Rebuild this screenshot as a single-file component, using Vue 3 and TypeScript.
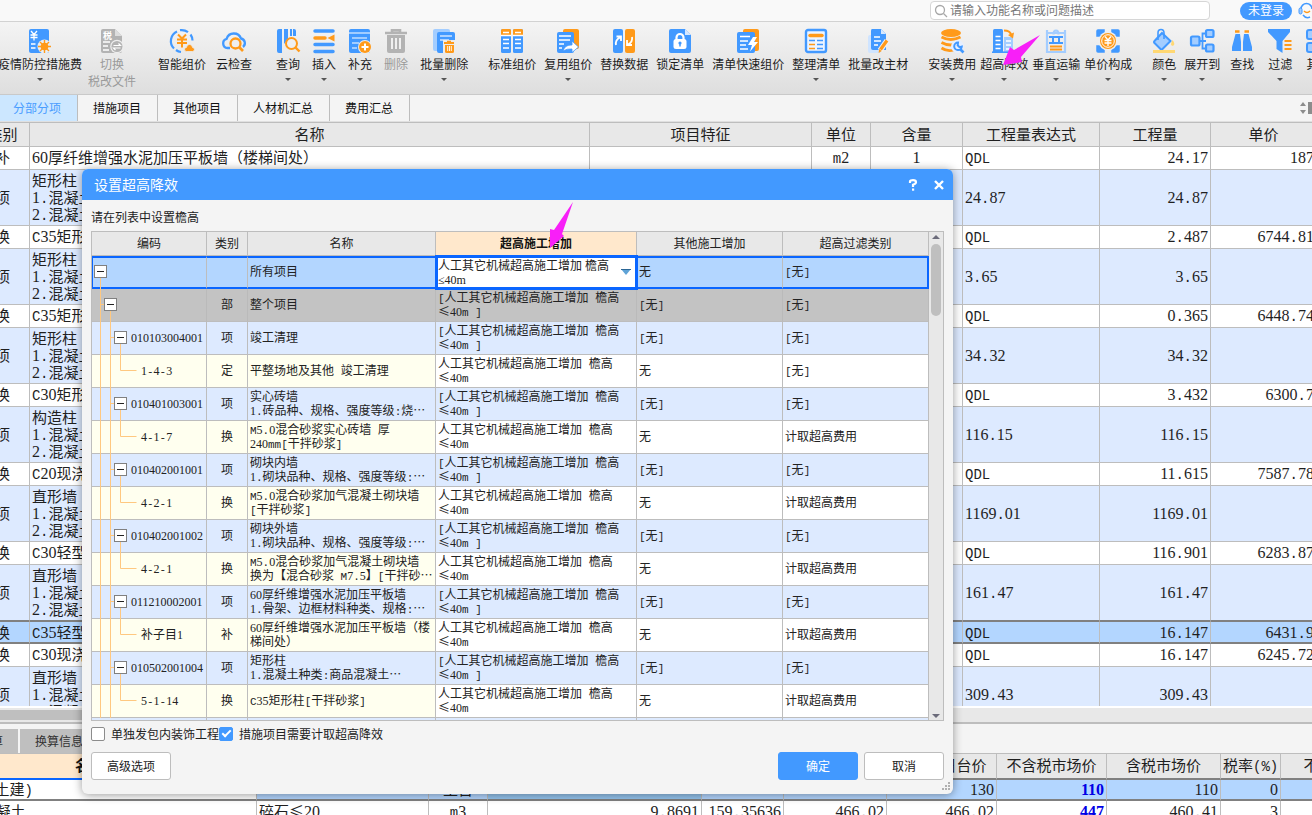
<script setup lang="ts">
import { h, ref } from 'vue'

type Tool = { label: string; sub?: string; icon: string; menu?: boolean; off?: boolean }
type ToolGroup = { cls: string; tools: Tool[] }
type SheetRow = {
  kind: string; name: string[]; unit?: string; ratio?: string
  expr: string; qty: string; price?: string; item?: boolean; sel?: boolean
}
type GridRow = {
  level: number; code?: string; kind?: string; name: string[]
  raise: string[]; other: string; filter: string; cls: string; open?: boolean
}

const Mixed = (props: { text: string }) =>
  (props.text.match(/[0-9]+|[ -\/:-~]+|[^ -~]+/g) ?? []).map((run) => {
    const cls = /^[0-9]/.test(run) ? 'run-num' : /^[ -~]/.test(run) ? 'run-sym' : 'run-han'
    return h('span', { class: cls }, run)
  })
Mixed.props = ['text']

const B = '#4299ff'
const O = '#ff9a1a'
const L = '#a3cdff'
const G = '#b3b3b3'
const yen = (x: number, y: number, c: string, w = 1.6) =>
  `<path d="M${x - 3} ${y - 4}l3 3.5l3-3.5M${x - 3.5} ${y}h7M${x - 3.5} ${y + 2.5}h7M${x} ${y}v5.5" fill="none" stroke="${c}" stroke-width="${w}"/>`

const icons: Record<string, string> = {
  virus: `<rect x="1" width="20" height="24" rx="2" fill="${B}"/>${yen(6, 6, '#fff', 1.3)}<path d="M3 15h4.500M3 19h4.500" stroke="#fff" stroke-width="1.600"/><circle cx="16.500" cy="17.500" r="7" fill="#e9eef5"/><circle cx="16.500" cy="17.500" r="3.800" fill="${O}"/><path d="M16.500 11v13M10 17.500h13M12 13l9 9M21 13l-9 9" stroke="${O}" stroke-width="1.400"/>`,
  tax: `<path d="M3 0h12l7 7v15q0 2-2 2H3q-2 0-2-2V2q0-2 2-2z" fill="${G}"/><path d="M15 0v7h7z" fill="#ddd"/><text x="3" y="10" font-size="9" font-weight="700" fill="#fff">税</text><path d="M3 13h7M3 17h5M3 21h6" stroke="#fff" stroke-width="1.400"/><circle cx="17" cy="17.500" r="6.800" fill="#eee"/><circle cx="17" cy="17.500" r="5.500" fill="${G}"/><path d="M13.500 16.500h7l-2-2M20.500 19h-7l2 2" stroke="#fff" stroke-width="1.200" fill="none"/>`,
  smart: `<path d="M7 2.500a10.500 10.500 0 0 0-3 17M10 1.200a10.500 10.500 0 0 1 8 2M20.500 5.500a10.500 10.500 0 0 1 2 6M6 21a10.500 10.500 0 0 0 5 2" fill="none" stroke="${B}" stroke-width="2.200"/><path d="M8 5.500l4 4l4-4M7 10.500h10M7 14h10M12 9.500v9" fill="none" stroke="${O}" stroke-width="2"/><path d="M16.500 22.500q-2.500-.3-2-2.500q.3-1.600 2-1.600q.4-3 3-3t3 3q2 .2 2 2q0 2-2 2.100z" fill="${O}" stroke="#ececec" stroke-width=".8"/>`,
  cloud: `<path d="M8 19H5.500A4.700 4.700 0 0 1 4.600 9.800A7.600 7.600 0 0 1 19 9.500A4.800 4.800 0 0 1 21 18" fill="none" stroke="${B}" stroke-width="2.300"/><circle cx="13.500" cy="14.500" r="5" fill="#efefef" stroke="${O}" stroke-width="2.300"/><path d="M17 18l4 4" stroke="${O}" stroke-width="2.600"/>`,
  query: `<path d="M1 2q0-2 2-2h3v24H3q-2 0-2-2zM8 0h4v10l-4 5zM14 0h2v7h-2zM17 0h1q2 0 2 2v5h-3z" fill="${B}"/><circle cx="15.500" cy="14.500" r="5.500" fill="#efefef" stroke="${O}" stroke-width="2"/><path d="M19.500 18.500l4 4" stroke="${O}" stroke-width="2.400"/>`,
  insert: `<path d="M3 2h18M3 15.500h18M3 22.500h18" stroke="${B}" stroke-width="3.500" stroke-linecap="round"/><path d="M3 9h10" stroke="${O}" stroke-width="3.500" stroke-linecap="round"/><path d="M15.500 9l7-3.500v7z" fill="${O}"/>`,
  add: `<rect x="1" width="21" height="24" rx="2" fill="${B}"/><path d="M1 4h21M4 9h15M4 14h7M4 19h5" stroke="#fff" stroke-width="1.200"/><circle cx="17" cy="18" r="7" fill="#ececec"/><circle cx="17" cy="18" r="6" fill="${O}"/><path d="M17 14.500v7M13.500 18h7" stroke="#fff" stroke-width="2"/>`,
  trash: `<path d="M1 4h22M8 3V1.200h8V3" fill="none" stroke="${G}" stroke-width="2.600"/><path d="M3 6h18v16q0 2-2 2H5q-2 0-2-2z" fill="${G}"/><path d="M8 9v11M12 9v11M16 9v11" stroke="#fff" stroke-width="1.600"/>`,
  batchdel: `<rect x="1" width="17" height="22" rx="2" fill="${L}"/><rect x="5" y="3" width="18" height="21" rx="2" fill="${B}"/><path d="M8 7h12M8 11h9" stroke="#cfe4ff" stroke-width="1.500"/><path d="M11 11h12v13H11z" fill="#ececec"/><path d="M12 14h10M15 12.800h4" stroke="${O}" stroke-width="2"/><path d="M13 16h9v6.500q0 1.500-1.500 1.500h-6q-1.500 0-1.500-1.500z" fill="${O}"/><path d="M15.700 17v5M19.300 17v5M17.500 17v5" stroke="#fff" stroke-width=".9"/>`,
  standard: `<rect x="1" width="10" height="24" rx="1.500" fill="${B}"/><rect x="13" width="10" height="24" rx="1.500" fill="${B}"/><path d="M1 6V1.500Q1 0 2.500 0h7Q11 0 11 1.500V6zM13 6V1.500Q13 0 14.500 0h7Q23 0 23 1.500V6z" fill="${O}"/><path d="M3 3.500h6M15 3.500h6M1 6.500h10M13 6.500h10M3 10.500h6M3 14.500h6M3 19h6M15 10.500h6M15 14.500h6M15 19h6" stroke="#fff" stroke-width="1.400"/>`,
  reuse: `<rect x="7" width="16" height="20" rx="2" fill="${O}"/><rect x="1" y="3" width="17" height="21" rx="2" fill="${B}"/><path d="M3 7h12M3 11h11M3 15h5M3 19h3" stroke="#fff" stroke-width="1.500"/><path d="M7 22q2-6.500 9-6v-4l6.500 6l-6.500 5.500v-3.500q-5-.5-9 2z" fill="#fff" stroke="${B}" stroke-width=".8"/>`,
  replace: `<rect x="1" width="10" height="24" rx="2" fill="${B}"/><rect x="13" width="10" height="24" rx="2" fill="${O}"/><path d="M4 16q-1-5 4-7.500M4.500 7.500H9v4.500" fill="none" stroke="#fff" stroke-width="1.800"/><path d="M20 8q1 5-4 7.500M15 11v5h5" fill="none" stroke="#fff" stroke-width="1.800"/>`,
  lock: `<path d="M3 0h14l6 6v16q0 2-2 2H3q-2 0-2-2V2q0-2 2-2z" fill="${B}"/><path d="M17 0v6h6z" fill="#d6e8ff"/><rect x="5.500" y="10" width="13" height="10" rx="2.500" fill="#fff"/><path d="M8.500 11V8.500a3.500 3.500 0 0 1 7 0V11" fill="none" stroke="#fff" stroke-width="2.200"/><circle cx="12" cy="14" r="1.600" fill="${B}"/><path d="M12 14v3.500" stroke="${B}" stroke-width="1.500"/>`,
  quick: `<rect x="7" width="16" height="22" rx="2" fill="${O}"/><rect x="1" y="3" width="18" height="21" rx="2" fill="${B}"/><path d="M4 7.500h10M4 12h8M4 16h6M4 20h8" stroke="#fff" stroke-width="1.500"/><path d="M17 8l-5 8h4l-2 6.500l8-9.500h-4l3-5z" fill="#fff"/>`,
  arrange: `<rect x="2" y="1" width="20" height="22" rx="2" fill="#eef5ff" stroke="${B}" stroke-width="2.400"/><path d="M6 6.500h12" stroke="${O}" stroke-width="3.500" stroke-linecap="round"/><path d="M5 11.500h6M13 15.500h6M13 19.500h6M13 11.500h6" stroke="${B}" stroke-width="1.700"/><path d="M5 15.500h6M5 19.500h6" stroke="${O}" stroke-width="1.700"/>`,
  edit: `<rect x="2" y="6" width="13" height="18" rx="2" fill="#cfe4ff"/><path d="M6 0h9l5 5v16h-13q-2 0-2-2V2q0-2 1-2z" fill="${B}"/><path d="M15 0v5h5z" fill="#d6e8ff"/><path d="M8 8h6M8 12h7M8 16h4" stroke="#fff" stroke-width="1.500"/><path d="M14 21.500l7-10" stroke="#f2f2f2" stroke-width="5.500"/><path d="M14.500 20.500l6.500-9" stroke="${O}" stroke-width="3.200"/><path d="M12.600 24l.5-4l2.600 2z" fill="${O}"/>`,
  install: `<ellipse cx="11" cy="4" rx="10" ry="4" fill="${O}"/><path d="M1.500 8q9 5 19 0M1.500 13.500q9 5 19 0M1.500 19q6 4 12 2" fill="none" stroke="${O}" stroke-width="2.800"/><circle cx="17.500" cy="17.500" r="6.500" fill="#e6efff"/><path d="M18 13.500a3.800 3.800 0 1 0 3.800 4l-2.300.6l-1.800-1.800z" fill="none" stroke="${B}" stroke-width="2"/><path d="M20 20l3.500 3.500" stroke="${B}" stroke-width="2.600"/>`,
  height: `<rect x="1" y="0" width="10" height="24" rx="1.500" fill="${B}"/><path d="M3.500 7.500h5M3.500 11.500h5M3.500 15.500h5M3.500 19.500h5" stroke="#fff" stroke-width="1.500"/><rect x="12" y="8" width="9" height="15" fill="${L}"/><path d="M14 12h5M14 16h5M14 20h5" stroke="#fff" stroke-width="1.300"/><path d="M0 23.200h23" stroke="${B}" stroke-width="1.600"/><path d="M12 1.500q6 0 7 4" fill="none" stroke="${O}" stroke-width="2.200"/><path d="M22 3.500l-1 6l-5-3.500z" fill="${O}"/>`,
  lift: `<path d="M3 1v23M21 1v23M3 4h18M9.500 5.500q0-4 2.500-4t2.500 4" fill="none" stroke="${L}" stroke-width="2.200"/><path d="M5 8h14M5 14h14M9 8v6M15 8v6" stroke="${B}" stroke-width="2"/><path d="M6 17.500h12M6 20.500h12" stroke="${O}" stroke-width="2"/><path d="M3 23h18" stroke="${L}" stroke-width="2"/>`,
  compose: `<path d="M1 2q0-1 1-1h6v3H5v3H1zM23 2q0-1-1-1h-6v3h3v3h4zM1 22q0 1 1 1h6v-3H5v-3H1zM23 22q0 1-1 1h-6v-3h3v-3h4z" fill="${B}" stroke="${B}" stroke-width="1.500"/><circle cx="12" cy="12" r="9.500" fill="#efefef"/><circle cx="12" cy="12" r="8" fill="${O}"/><circle cx="12" cy="12" r="6.300" fill="none" stroke="#fff" stroke-width="1"/>${yen(12, 11.5, '#fff', 1.3)}`,
  color: `<path d="M10 4l8.500 8l-8 8q-1 1-2 0l-6-6q-1-1 0-2z" fill="${L}" stroke="${B}" stroke-width="2"/><path d="M6 11V4q0-3.500 3-3.500t3 3.500v6" fill="none" stroke="${B}" stroke-width="1.600"/><path d="M20.500 11q3 4 1 5.500q-2 .7-2.500-1q0-2 1.500-4.500z" fill="#ffd873"/><path d="M1 22.500h22" stroke="#ffd873" stroke-width="3"/>`,
  expand: `<path d="M9 12h7M12.500 12V4.500h4M12.500 12v7.500h4" fill="none" stroke="${B}" stroke-width="1.800"/><rect x="1" y="7.500" width="8.500" height="9" rx="1.500" fill="${L}" stroke="${B}" stroke-width="2.200"/><rect x="16" y="1" width="7.500" height="7" rx="1.500" fill="${L}" stroke="${B}" stroke-width="2.200"/><rect x="16" y="15.500" width="7.500" height="7" rx="1.500" fill="${L}" stroke="${B}" stroke-width="2.200"/>`,
  find: `<path d="M5.500 5h4.500l1 8v9H2v-4zM14 5h4.500l3.500 13v4h-9v-9z" fill="${B}"/><path d="M5 2.500h4.500M14.500 2.500H19" stroke="${O}" stroke-width="2.400"/>`,
  filter: `<path d="M0 0h22v3l-7.500 9v12l-6-4v-8L0 3z" fill="${B}"/><path d="M16.500 12h7M16.500 16h7M16.500 20h7" stroke="${O}" stroke-width="2.200"/>`,
  other: `<rect x="1" y="1" width="9" height="9" rx="2" fill="${L}" stroke="${B}" stroke-width="2"/><rect x="14" y="1" width="9" height="9" rx="2" fill="${L}" stroke="${B}" stroke-width="2"/><rect x="1" y="14" width="9" height="9" rx="2" fill="${L}" stroke="${B}" stroke-width="2"/><rect x="14" y="14" width="9" height="9" rx="2" fill="${L}" stroke="${B}" stroke-width="2"/>`,
}

const groups: ToolGroup[] = [
  { cls: 'gap-6 first', tools: [
    { label: '疫情防控措施费', icon: 'virus', menu: true },
    { label: '切换', sub: '税改文件', icon: 'tax', off: true },
  ] },
  { cls: 'gap-10 lead-22', tools: [
    { label: '智能组价', icon: 'smart' },
    { label: '云检查', icon: 'cloud' },
  ] },
  { cls: 'gap-12 lead-24', tools: [
    { label: '查询', icon: 'query', menu: true },
    { label: '插入', icon: 'insert', menu: true },
    { label: '补充', icon: 'add', menu: true },
    { label: '删除', icon: 'trash', off: true },
    { label: '批量删除', icon: 'batchdel', menu: true },
  ] },
  { cls: 'gap-8', tools: [
    { label: '标准组价', icon: 'standard' },
    { label: '复用组价', icon: 'reuse', menu: true },
    { label: '替换数据', icon: 'replace' },
    { label: '锁定清单', icon: 'lock' },
    { label: '清单快速组价', icon: 'quick' },
    { label: '整理清单', icon: 'arrange', menu: true },
    { label: '批量改主材', icon: 'edit' },
  ] },
  { cls: 'gap-4', tools: [
    { label: '安装费用', icon: 'install', menu: true },
    { label: '超高降效', icon: 'height', menu: true },
    { label: '垂直运输', icon: 'lift', menu: true },
    { label: '单价构成', icon: 'compose', menu: true },
  ] },
  { cls: 'gap-8', tools: [
    { label: '颜色', icon: 'color', menu: true },
    { label: '展开到', icon: 'expand', menu: true },
  ] },
  { cls: 'gap-14 lead-10', tools: [
    { label: '查找', icon: 'find' },
    { label: '过滤', icon: 'filter', menu: true },
    { label: '其他', icon: 'other' },
  ] },
]

const tabs = ['分部分项', '措施项目', '其他项目', '人材机汇总', '费用汇总']
const activeTab = ref(tabs[0])

const spec = (title: string) => [title, '1.混凝土', '2.混凝土']
const rows: SheetRow[] = [
  { kind: '补', name: ['60厚纤维增强水泥加压平板墙（楼梯间处）'], unit: 'm2', ratio: '1', expr: 'QDL', qty: '24.17', price: '187' },
  { kind: '项', name: spec('矩形柱'), expr: '24.87', qty: '24.87', item: true },
  { kind: '换', name: ['C35矩形柱'], expr: 'QDL', qty: '2.487', price: '6744.81' },
  { kind: '项', name: spec('矩形柱'), expr: '3.65', qty: '3.65', item: true },
  { kind: '换', name: ['C35矩形柱'], expr: 'QDL', qty: '0.365', price: '6448.74' },
  { kind: '项', name: spec('矩形柱'), expr: '34.32', qty: '34.32', item: true },
  { kind: '换', name: ['C30矩形柱'], expr: 'QDL', qty: '3.432', price: '6300.7' },
  { kind: '项', name: spec('构造柱'), expr: '116.15', qty: '116.15', item: true },
  { kind: '换', name: ['C20现浇'], expr: 'QDL', qty: '11.615', price: '7587.78' },
  { kind: '项', name: spec('直形墙'), expr: '1169.01', qty: '1169.01', item: true },
  { kind: '换', name: ['C30轻型'], expr: 'QDL', qty: '116.901', price: '6283.87' },
  { kind: '项', name: spec('直形墙'), expr: '161.47', qty: '161.47', item: true },
  { kind: '换', name: ['C35轻型'], expr: 'QDL', qty: '16.147', price: '6431.9', sel: true },
  { kind: '换', name: ['C30现浇'], expr: 'QDL', qty: '16.147', price: '6245.72' },
  { kind: '项', name: spec('直形墙'), expr: '309.43', qty: '309.43', item: true },
]

const bracketed = ['[人工其它机械超高施工增加 檐高', '≤40m ]']
const plain = ['人工其它机械超高施工增加 檐高', '≤40m']
const item = (code: string, ...name: string[]): GridRow =>
  ({ level: 2, code, kind: '项', name, raise: bracketed, other: '[无]', filter: '[无]', cls: 'item', open: true })
const leaf = (code: string, kind: string, filter: string, ...name: string[]): GridRow =>
  ({ level: 3, code, kind, name, raise: plain, other: '无', filter, cls: 'leaf' })

const grid: GridRow[] = [
  { level: 0, name: ['所有项目'], raise: plain, other: '无', filter: '[无]', cls: 'current', open: true },
  { level: 1, kind: '部', name: ['整个项目'], raise: bracketed, other: '[无]', filter: '[无]', cls: 'part', open: true },
  item('010103004001', '竣工清理'),
  leaf('1-4-3', '定', '[无]', '平整场地及其他 竣工清理'),
  item('010401003001', '实心砖墙', '1.砖品种、规格、强度等级:烧…'),
  leaf('4-1-7', '换', '计取超高费用', 'M5.0混合砂浆实心砖墙 厚', '240mm[干拌砂浆]'),
  item('010402001001', '砌块内墙', '1.砌块品种、规格、强度等级:…'),
  leaf('4-2-1', '换', '计取超高费用', 'M5.0混合砂浆加气混凝土砌块墙', '[干拌砂浆]'),
  item('010402001002', '砌块外墙', '1.砌块品种、规格、强度等级:…'),
  leaf('4-2-1', '换', '计取超高费用', 'M5.0混合砂浆加气混凝土砌块墙', '换为【混合砂浆 M7.5】[干拌砂…'),
  item('011210002001', '60厚纤维增强水泥加压平板墙', '1.骨架、边框材料种类、规格:…'),
  leaf('补子目1', '补', '计取超高费用', '60厚纤维增强水泥加压平板墙（楼', '梯间处）'),
  item('010502001004', '矩形柱', '1.混凝土种类:商品混凝土…'),
  leaf('5-1-14', '换', '计取超高费用', 'C35矩形柱[干拌砂浆]'),
]

const raiseValue = ref('≤40m')
const onlyFinish = ref(false)
const withMeasures = ref(true)
</script>

<template>
  <div class="app">
    <header class="topbar">
      <label class="search">
        <svg width="14" height="14" viewBox="0 0 14 14" aria-hidden="true"><circle cx="6" cy="6" r="4.500" fill="none" stroke="#a8a8a8" stroke-width="1.300" /><path d="M9.500 9.500l3.500 3.500" stroke="#a8a8a8" stroke-width="1.300" /></svg>
        <input type="text" placeholder="请输入功能名称或问题描述" aria-label="搜索" />
      </label>
      <button type="button" class="login">未登录</button>
      <button type="button" class="service" aria-label="客服">
        <svg width="16" height="18" viewBox="0 0 16 18"><path d="M3 7a5.500 5.500 0 0 1 11 0" fill="none" stroke="#4299ff" stroke-width="1.500" /><rect x="1" y="6" width="3" height="6" rx="1.500" fill="#a3cdff" stroke="#4299ff" /><path d="M5 13q3 4 7 2" fill="none" stroke="#4299ff" stroke-width="1.500" /><path d="M6 9q3 3 6 0" fill="none" stroke="#ff9a1a" stroke-width="1.500" /></svg>
      </button>
    </header>

    <nav class="toolbar" aria-label="工具栏">
      <div v-for="(g, gi) in groups" :key="gi" class="group" :class="g.cls">
        <button v-for="t in g.tools" :key="t.label" type="button" class="tool" :class="{ off: t.off }">
          <svg class="icon" width="24" height="24" viewBox="0 0 24 24" aria-hidden="true" v-html="icons[t.icon]"></svg>
          <span>{{ t.label }}</span>
          <span v-if="t.sub">{{ t.sub }}</span>
          <i v-if="t.menu" class="caret"></i>
        </button>
      </div>
    </nav>

    <div class="tabs">
      <button v-for="t in tabs" :key="t" type="button" :class="{ active: t === activeTab }" @click="activeTab = t">{{ t }}</button>
      <svg class="updown" width="12" height="14" viewBox="0 0 12 14" aria-hidden="true"><path d="M0 5l3-4l3 4zM0 9l3 4l3-4z" fill="#8c8c8c" /><rect x="8" y="1" width="4" height="12" fill="#8c8c8c" /></svg>
    </div>

    <main class="main">
      <table class="sheet list">
        <colgroup><col class="w54" /><col class="w560" /><col /><col class="w59" /><col class="w92" /><col class="w137" /><col class="w111" /><col class="w106" /></colgroup>
        <thead>
          <tr><th>类别</th><th>名称</th><th>项目特征</th><th>单位</th><th>含量</th><th>工程量表达式</th><th>工程量</th><th>单价</th></tr>
        </thead>
        <tbody>
          <tr v-for="(r, i) in rows" :key="i" :class="{ item: r.item, sel: r.sel }">
            <td class="c">{{ r.kind }}</td>
            <td><div v-for="n in r.name" :key="n" class="line"><Mixed :text="n" /></div></td>
            <td></td>
            <td class="c"><Mixed v-if="r.unit" :text="r.unit" /></td>
            <td class="c"><Mixed v-if="r.ratio" :text="r.ratio" /></td>
            <td><Mixed :text="r.expr" /></td>
            <td class="r"><Mixed :text="r.qty" /></td>
            <td class="r"><Mixed v-if="r.price" :text="r.price" /></td>
          </tr>
        </tbody>
      </table>
    </main>
    <div class="hscroll"><div class="thumb"></div></div>

    <section class="detail">
      <div class="subtabs">
        <button type="button" class="cut">算</button>
        <button type="button">换算信息</button>
      </div>
      <table class="sheet lower">
        <colgroup><col class="w333" /><col class="w172" /><col class="w59" /><col /><col class="w82" /><col class="w103" /><col class="w110" /><col class="w110" /><col class="w114" /><col class="w60" /><col class="w106" /></colgroup>
        <thead>
          <tr><th class="hot">名称</th><th></th><th></th><th></th><th></th><th></th><th>定额工日台价</th><th>不含税市场价</th><th>含税市场价</th><th>税率<Mixed text="(%)" /></th><th>不含税价</th></tr>
        </thead>
        <tbody>
          <tr class="sel">
            <td class="white"><Mixed text="综合工日(土建)" /></td><td></td><td class="c">工日</td><td class="deep"></td><td></td><td></td>
            <td class="r"><Mixed text="130" /></td><td class="r key"><Mixed text="110" /></td><td class="r"><Mixed text="110" /></td><td class="r"><Mixed text="0" /></td><td></td>
          </tr>
          <tr>
            <td><Mixed text="C30商品混凝土" /></td><td><Mixed text="碎石≤20" /></td><td class="c"><Mixed text="m3" /></td><td class="r"><Mixed text="9.8691" /></td><td class="r"><Mixed text="159.35636" /></td><td class="r"><Mixed text="466.02" /></td>
            <td class="r"><Mixed text="466.02" /></td><td class="r key"><Mixed text="447" /></td><td class="r"><Mixed text="460.41" /></td><td class="r"><Mixed text="3" /></td><td></td>
          </tr>
        </tbody>
      </table>
    </section>

    <div class="dialog" role="dialog" aria-labelledby="dlg-title">
      <div class="titlebar">
        <h1 id="dlg-title">设置超高降效</h1>
        <button type="button" aria-label="帮助"><svg width="10" height="12" viewBox="0 0 10 12"><path d="M2 4V2.500Q2 1.200 5 1.200T8 3.200Q8 4.500 5 5.800V8" fill="none" stroke="#fff" stroke-width="2.200" /><rect x="4" y="9.500" width="2.200" height="2.200" fill="#fff" /></svg></button>
        <button type="button" aria-label="关闭"><svg width="10" height="10" viewBox="0 0 10 10"><path d="M1 1l8 8M9 1l-8 8" stroke="#fff" stroke-width="2.400" /></svg></button>
      </div>
      <div class="body">
        <p>请在列表中设置檐高</p>
        <div class="frame">
          <div class="view">
            <table class="grid">
              <colgroup><col class="w115" /><col class="w41" /><col class="w188" /><col class="w201" /><col /><col class="w146" /></colgroup>
              <thead>
                <tr><th>编码</th><th>类别</th><th>名称</th><th class="hot">超高施工增加</th><th>其他施工增加</th><th>超高过滤类别</th></tr>
              </thead>
              <tbody>
                <tr v-for="(r, i) in grid" :key="i" :class="r.cls">
                  <td class="code" :class="'lv' + r.level">
                    <svg class="tree" width="46" height="33" viewBox="0 0 46 33" aria-hidden="true">
                      <g fill="none" stroke="#ffc880">
                        <path v-if="r.level > 0" d="M8.500 0v33" />
                        <path v-else d="M8.500 22v11" />
                        <path v-if="r.level > 1" d="M18.500 0v33" />
                        <path v-if="r.level === 1" d="M8.500 15.500h4M18.500 22v11" />
                        <path v-if="r.level === 2" d="M18.500 15.500h4M28.500 22v11" />
                        <path v-if="r.level === 3" d="M28.500 0v15.500h16" />
                      </g>
                      <g v-if="r.open" :transform="`translate(${r.level * 10 + 2} 9)`">
                        <rect x="0.500" y="0.500" width="12" height="12" fill="#fff" stroke="#808080" />
                        <path d="M3 6.500h7" stroke="#222" />
                      </g>
                    </svg>
                    <Mixed v-if="r.code" :text="r.code" />
                  </td>
                  <td class="c">{{ r.kind }}</td>
                  <td><div v-for="n in r.name" :key="n" class="line"><Mixed :text="n" /></div></td>
                  <td v-if="r.level === 0" class="editor">
                    <div class="combo">
                      <select v-model="raiseValue" aria-label="超高施工增加">
                        <option value="≤40m">人工其它机械超高施工增加 檐高≤40m</option>
                      </select>
                      <svg width="10" height="6" viewBox="0 0 10 6" aria-hidden="true"><path d="M0 0h10L5 6z" fill="#5fa3d6" /><path d="M0 .5h10" stroke="#2c6796" /></svg>
                    </div>
                  </td>
                  <td v-else><div v-for="n in r.raise" :key="n" class="line"><Mixed :text="n" /></div></td>
                  <td><Mixed :text="r.other" /></td>
                  <td><Mixed :text="r.filter" /></td>
                </tr>
                <tr class="item"><td></td><td></td><td></td><td></td><td></td><td></td></tr>
              </tbody>
            </table>
          </div>
          <div class="vscroll">
            <svg width="8" height="4" viewBox="0 0 8 4" aria-hidden="true"><path d="M0 4l4-4l4 4z" fill="#6b6b7a" /></svg>
            <div class="vthumb"></div>
            <svg width="8" height="4" viewBox="0 0 8 4" aria-hidden="true"><path d="M0 0l4 4l4-4z" fill="#6b6b7a" /></svg>
          </div>
        </div>
        <div class="checks">
          <label><input v-model="onlyFinish" type="checkbox" />单独发包内装饰工程</label>
          <label><input v-model="withMeasures" type="checkbox" />措施项目需要计取超高降效</label>
        </div>
        <div class="actions">
          <button type="button">高级选项</button>
          <button type="button" class="primary">确定</button>
          <button type="button">取消</button>
        </div>
      </div>
      <svg class="grip" width="8" height="8" viewBox="0 0 8 8" aria-hidden="true"><path d="M6 0h2v2H6zM3 3h2v2H3zM6 3h2v2H6zM0 6h2v2H0zM3 6h2v2H3zM6 6h2v2H6z" fill="#b0b0b0" /></svg>
    </div>

    <svg class="mark one" width="37" height="31" viewBox="0 0 37 31" aria-hidden="true"><path d="M0 30L7 12l4 3L37 0L18 22l1 5z" fill="#f81ff8" /></svg>
    <svg class="mark two" width="24" height="47" viewBox="0 0 24 47" aria-hidden="true"><path d="M0 46V27l4 1L23 0L12 32l2 2z" fill="#f81ff8" /></svg>
  </div>
</template>

<style>
html, body { margin: 0; background: #f4f4f4; }
.run-num { font-family: "Liberation Serif", serif; line-height: 0; }
.run-sym { font-family: "Liberation Mono", monospace; line-height: 0; white-space: pre; }
.run-han { line-height: 0; }
.sheet .run-num { font-size: 16px; }
.sheet .run-sym { font-size: 14px; }
.grid .run-num { font-size: 12px; }
.grid .run-sym { font-size: 11px; }
</style>

<style scoped>
.app {
  position: relative;
  display: flex;
  flex-direction: column;
  height: 100vh;
  overflow: hidden;
  background: #f4f4f4;
  color: #222;
  font-family: "Noto Sans CJK SC", sans-serif;
  font-size: 12px;
  line-height: 16px;
}
button, input, select { font: inherit; color: inherit; margin: 0; }
button { border: 0; padding: 0; background: none; white-space: nowrap; }

.topbar {
  display: flex;
  flex: none;
  justify-content: flex-end;
  align-items: center;
  height: 21px;
  border-bottom: 1px solid #d2d2d2;
  background: #f9f9f9;
}
.search {
  display: flex;
  align-items: center;
  width: 278px;
  height: 17px;
  margin-right: 30px;
  border: 1px solid #d6d6d6;
  border-radius: 4px;
  background: #fff;
}
.search svg { margin: 0 2px 0 3px; }
.search input { flex: 1; height: 16px; padding: 0 0 1px; border: 0; outline: 0; background: none; }
.search input::placeholder { color: #777; opacity: 1; }
.login { width: 52px; height: 18px; padding-bottom: 1px; border-radius: 9px; background: #4299ff; color: #fff; }
.service { width: 14px; height: 18px; margin-left: 6px; }

.toolbar {
  display: flex;
  flex: none;
  height: 72px;
  overflow: hidden;
  border-bottom: 1px solid #c9c9c9;
  background: linear-gradient(#f4f4f4, #dedede);
}
.group { display: flex; flex: none; margin-left: 20px; }
.group.first { margin-left: -2px; }
.group.lead-10 { margin-left: 10px; }
.group.lead-22 { margin-left: 22px; }
.group.lead-24 { margin-left: 24px; }
.gap-4 { gap: 4px; }
.gap-6 { gap: 6px; }
.gap-8 { gap: 8px; }
.gap-10 { gap: 10px; }
.gap-12 { gap: 12px; }
.gap-14 { gap: 14px; }
.tool { display: flex; flex-direction: column; align-items: center; padding-top: 7px; color: #1c1c1c; line-height: 17px; }
.tool.off { color: #9a9a9a; }
.icon { overflow: visible; margin-bottom: 2px; }
.caret { margin-top: 6px; border: 3px solid transparent; border-top-color: #555; border-bottom: 0; }

.tabs { display: flex; flex: none; align-items: center; height: 26px; border-bottom: 1px solid #e0e0e0; }
.tabs button { height: 26px; padding: 0 16px 0 15px; border-right: 1px solid #bdbdbd; color: #111; }
.tabs button.active { padding: 0 16px 0 13px; background: #cce7ff; color: #4a9dff; }
.updown { margin-left: auto; }

.main { flex: 1; min-height: 0; overflow: hidden; border-top: 1px solid #bdbdbd; background: #fff; border-bottom: 2px solid #fff; }
.sheet { table-layout: fixed; border-collapse: separate; border-spacing: 0; font-size: 15px; line-height: 17px; color: #1f1f1f; }
.list { width: calc(100% + 29px); margin-left: -24px; }
.sheet th, .sheet td { box-sizing: border-box; padding: 0 2px 3px; border: 0 solid #bdbdbd; border-width: 0 1px 1px 0; overflow: hidden; white-space: nowrap; text-align: left; }
.sheet th { height: 24px; background: #e8e8e8; font-weight: 400; text-align: center; }
.sheet td { height: 23px; background: #fff; }
.sheet td.c { text-align: center; }
.sheet td.r { text-align: right; }
.sheet .item td { height: 56px; background: #ddeaff; }
.sheet .sel td { padding-bottom: 2px; border-top: 1px solid #808080; border-bottom: 2px solid #808080; background: #b3d6ff; }
.list tr:has(+ .sel) td { border-bottom-color: #808080; }
.w41 { width: 41px; } .w54 { width: 54px; } .w59 { width: 59px; } .w60 { width: 60px; }
.w82 { width: 82px; } .w92 { width: 92px; } .w103 { width: 103px; } .w106 { width: 106px; }
.w110 { width: 110px; } .w111 { width: 111px; } .w114 { width: 114px; } .w115 { width: 115px; }
.w137 { width: 137px; } .w146 { width: 146px; } .w172 { width: 172px; } .w188 { width: 188px; }
.w201 { width: 201px; } .w333 { width: 333px; } .w560 { width: 560px; }

.hscroll { flex: none; height: 14px; border-bottom: 2px solid #bdbdbd; background: #e8e8e8; }
.thumb { width: 40%; height: 10px; margin-top: 2px; border-radius: 0 5px 5px 0; background: #bfbfbf; }

.detail { flex: none; height: 91px; overflow: hidden; }
.subtabs { display: flex; gap: 2px; height: 24px; padding-top: 5px; border-bottom: 1px solid #bdbdbd; }
.subtabs button { padding: 0 15px; background: #bfbfbf; color: #333; }
.subtabs .cut { margin-left: -24px; }
.lower { width: calc(100% + 151px); margin-left: -76px; }
.lower th { height: 26px; padding-bottom: 4px; border-bottom: 2px solid #808080; }
.lower th.hot { border-bottom-color: #0a66ff; background: #ffe8cc; color: #111; font-weight: 700; }
.lower .sel td { height: 21px; border-top: 0; }
.lower .sel td.white { background: #fff; }
.lower .sel td.deep { background: #94c4ee; }
.lower .key { color: #0000e6; font-weight: 700; }

.dialog {
  position: absolute;
  top: 169px;
  left: 82px;
  right: 359px;
  border-radius: 6px;
  background: #f4f4f4;
  box-shadow: 0 1px 10px rgba(0, 0, 0, 0.4);
}
.titlebar { display: flex; align-items: center; gap: 16px; height: 31px; padding: 0 9px 0 12px; border-radius: 6px 6px 0 0; background: #4299ff; }
.titlebar h1 { flex: 1; margin: 0; padding-bottom: 2px; color: #fff; font-size: 14px; font-weight: 400; line-height: 20px; }
.titlebar button { display: flex; }
.body { padding: 9px 9px 14px; }
.body p { margin: 0 0 6px; }
.frame { display: flex; height: 488px; border: 1px solid #bdbdbd; background: #fff; }
.view { flex: 1; min-width: 0; overflow: hidden; }
.grid { width: 100%; table-layout: fixed; border-collapse: separate; border-spacing: 0; line-height: 14px; }
.grid th, .grid td { box-sizing: border-box; padding: 0 2px 3px; border: 0 solid #bdbdbd; border-width: 0 1px 1px 0; white-space: nowrap; text-align: left; }
.grid th { height: 24px; padding-bottom: 1px; background: #e8e8e8; font-weight: 400; text-align: center; }
.grid th.hot { background: #ffe8cc; color: #111; font-weight: 700; }
.grid td { height: 33px; background: #fff; }
.grid td.c { text-align: center; }
.grid td.code { position: relative; padding-left: 39px; }
.grid td.lv3 { padding-left: 49px; }
.tree { position: absolute; top: 0; left: 0; z-index: 1; }
.grid .item td { background: #ddeaff; }
.grid .part td { background: #c3c3c3; border-right-color: #bababa; }
.grid .leaf td:nth-child(-n + 3) { background: #ffffef; }
.grid .current td { border-top: 2px solid #0a66ff; border-bottom: 2px solid #0a66ff; background: #b3d6ff; }
.grid .current td:first-child { border-left: 1px solid #0a66ff; }
.grid .current td:last-child { border-right: 2px solid #0a66ff; }
.grid .current .tree { top: -2px; left: -1px; }
.grid .current td.editor { position: relative; padding: 0; }
.combo { position: absolute; inset: -3px -2px -3px -1px; z-index: 2; border: 3px solid #0a66ff; background: #fff; }
.combo select { width: 100%; height: 28px; padding: 0 16px 0 0; border: 0; outline: 0; appearance: none; background: none; font-family: "Liberation Serif", "Noto Sans CJK SC", serif; line-height: 14px; white-space: normal; }
.combo svg { position: absolute; right: 4px; top: 11px; pointer-events: none; }

.vscroll { display: flex; flex: none; flex-direction: column; align-items: center; width: 14px; padding: 3px 0 2px; background: #e8e8e8; }
.vthumb { width: 10px; height: 72px; margin: 5px 0 auto; border-radius: 5px; background: #bfbfbf; }

.checks { display: flex; margin-top: 5px; }
.checks label { display: flex; align-items: center; gap: 6px; }
.checks input { width: 14px; height: 14px; margin: 0; appearance: none; border: 1px solid #8c8c8c; border-radius: 2px; background: #fff; }
.checks input:checked { border-color: #4299ff; background: #4299ff; }
.checks input:checked::after { content: ""; display: block; width: 7px; height: 3px; margin: 2px 0 0 2px; border: 2px solid #fff; border-width: 0 0 2px 2px; transform: rotate(-45deg); }
.actions { display: flex; gap: 6px; margin-top: 10px; }
.actions button { width: 80px; height: 28px; border: 1px solid #bdbdbd; border-radius: 3px; background: #fff; }
.actions .primary { margin-left: auto; border-color: #4299ff; background: #4299ff; color: #fff; }
.grip { position: absolute; right: 3px; bottom: 4px; }

.mark { position: absolute; z-index: 3; pointer-events: none; }
.mark.one { left: 1003px; top: 35px; }
.mark.two { left: 550px; top: 202px; }
</style>
